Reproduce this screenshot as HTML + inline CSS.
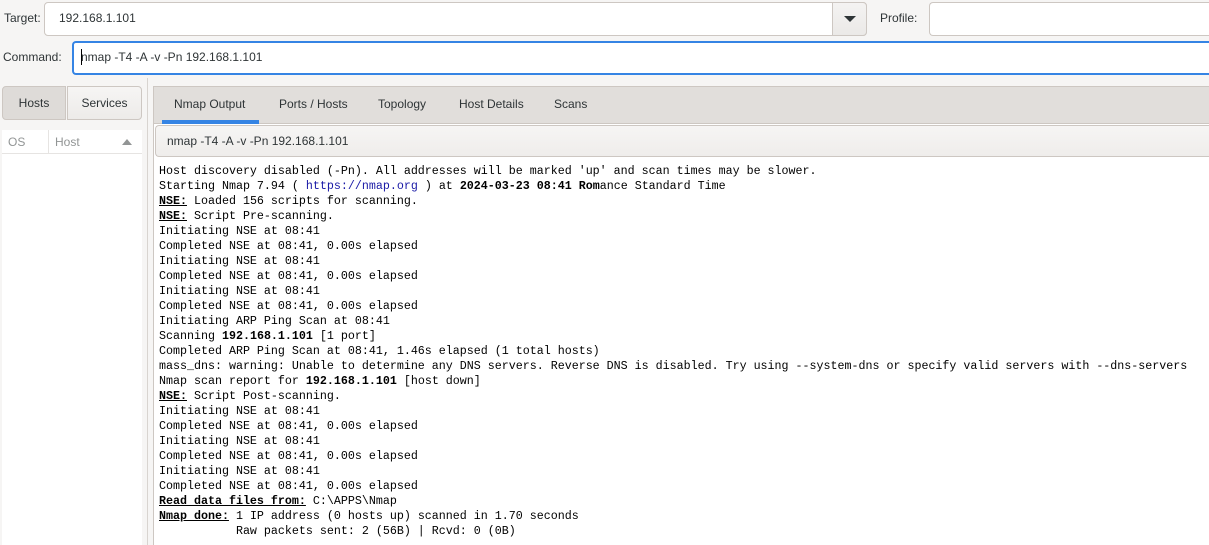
<!DOCTYPE html>
<html style="overflow:hidden;height:545px"><head><meta charset="utf-8"><style>
*{box-sizing:border-box;margin:0;padding:0}
body{width:1209px;height:545px;overflow:hidden;background:#f6f5f4;font-family:"Liberation Sans",sans-serif;font-size:12px;color:#2e3436;position:relative}
.a{position:absolute}
.inp{background:#fff;border:1px solid #cdc7c2;border-radius:4px}
.lbl{font-size:12px;color:#2e3436}
pre{font-family:"Liberation Mono",monospace;font-size:11.67px;line-height:15px;color:#000}
pre b{font-weight:bold}
pre u{font-weight:bold;text-decoration:underline}
.tab{position:absolute;top:97px;font-size:12px;color:#2e3436}
</style></head><body>
<div class="a lbl" style="left:4px;top:11px">Target:</div>
<div class="a inp" style="left:44px;top:2px;width:823px;height:34px"></div>
<div class="a lbl" style="left:59px;top:11px">192.168.1.101</div>
<div class="a" style="left:832px;top:2px;width:35px;height:34px;border:1px solid #cdc7c2;border-radius:0 4px 4px 0;background:linear-gradient(#f4f3f2,#ebe9e7)"></div>
<div class="a" style="left:844px;top:16px;width:0;height:0;border-left:6px solid transparent;border-right:6px solid transparent;border-top:6px solid #2e3436"></div>
<div class="a lbl" style="left:880px;top:11px">Profile:</div>
<div class="a inp" style="left:929px;top:2px;width:280px;height:34px;border-right:none;border-radius:4px 0 0 4px"></div>
<div class="a lbl" style="left:3px;top:50px">Command:</div>
<div class="a" style="left:72px;top:41px;width:1137px;height:34px;background:#fff;border:2px solid #3584e4;border-right:none;border-radius:4px 0 0 4px"></div>
<div class="a lbl" style="left:81px;top:50px">nmap -T4 -A -v -Pn 192.168.1.101</div>
<div class="a" style="left:81px;top:49px;width:1px;height:16px;background:#000"></div>

<div class="a" style="left:2px;top:86px;width:64px;height:34px;background:#dedbd8;border:1px solid #cdc7c2;border-radius:4px 0 0 4px;text-align:center;line-height:32px">Hosts</div>
<div class="a" style="left:67px;top:86px;width:75px;height:34px;background:linear-gradient(#f6f5f4,#edebe9);border:1px solid #cdc7c2;border-radius:0 4px 4px 0;text-align:center;line-height:32px">Services</div>
<div class="a" style="left:2px;top:130px;width:140px;height:415px;background:#fff"></div>
<div class="a" style="left:2px;top:130px;width:140px;height:24px;border-bottom:1px solid #e6e4e2"></div>
<div class="a" style="left:48px;top:130px;width:1px;height:24px;background:#e6e4e2"></div>
<div class="a" style="left:8px;top:135px;color:#929595">OS</div>
<div class="a" style="left:55px;top:135px;color:#929595">Host</div>
<div class="a" style="left:122px;top:139px;border-left:5px solid transparent;border-right:5px solid transparent;border-bottom:6px solid #929595"></div>
<div class="a" style="left:147px;top:78px;width:1px;height:467px;background:#d8d4d0"></div>

<div class="a" style="left:153px;top:86px;width:1056px;height:459px;border-left:1px solid #cdc7c2;border-top:1px solid #cdc7c2;background:#fff"></div>
<div class="a" style="left:153px;top:86px;width:1056px;height:38px;background:#e1dedb;border:1px solid #cdc7c2;border-right:none"></div>
<div class="tab" style="left:174px">Nmap Output</div>
<div class="a" style="left:162px;top:120px;width:97px;height:4px;background:#3584e4"></div>
<div class="tab" style="left:279px">Ports / Hosts</div>
<div class="tab" style="left:378px">Topology</div>
<div class="tab" style="left:459px">Host Details</div>
<div class="tab" style="left:554px">Scans</div>
<div class="a" style="left:155px;top:125px;width:1054px;height:32px;background:linear-gradient(#f6f5f4,#efedeb);border:1px solid #cdc7c2;border-right:none;border-radius:4px 0 0 4px"></div>
<div class="a" style="left:167px;top:134px">nmap -T4 -A -v -Pn 192.168.1.101</div>

<pre class="a" style="left:159px;top:164px">Host discovery disabled (-Pn). All addresses will be marked 'up' and scan times may be slower.
Starting Nmap 7.94 ( <span style="color:#1a1aa6">https://nmap.org</span> ) at <b>2024-03-23 08:41 Rom</b>ance Standard Time
<u>NSE:</u> Loaded 156 scripts for scanning.
<u>NSE:</u> Script Pre-scanning.
Initiating NSE at 08:41
Completed NSE at 08:41, 0.00s elapsed
Initiating NSE at 08:41
Completed NSE at 08:41, 0.00s elapsed
Initiating NSE at 08:41
Completed NSE at 08:41, 0.00s elapsed
Initiating ARP Ping Scan at 08:41
Scanning <b>192.168.1.101</b> [1 port]
Completed ARP Ping Scan at 08:41, 1.46s elapsed (1 total hosts)
mass_dns: warning: Unable to determine any DNS servers. Reverse DNS is disabled. Try using --system-dns or specify valid servers with --dns-servers
Nmap scan report for <b>192.168.1.101</b> [host down]
<u>NSE:</u> Script Post-scanning.
Initiating NSE at 08:41
Completed NSE at 08:41, 0.00s elapsed
Initiating NSE at 08:41
Completed NSE at 08:41, 0.00s elapsed
Initiating NSE at 08:41
Completed NSE at 08:41, 0.00s elapsed
<u>Read data files from:</u> C:\APPS\Nmap
<u>Nmap done:</u> 1 IP address (0 hosts up) scanned in 1.70 seconds
           Raw packets sent: 2 (56B) | Rcvd: 0 (0B)</pre>
</body></html>
